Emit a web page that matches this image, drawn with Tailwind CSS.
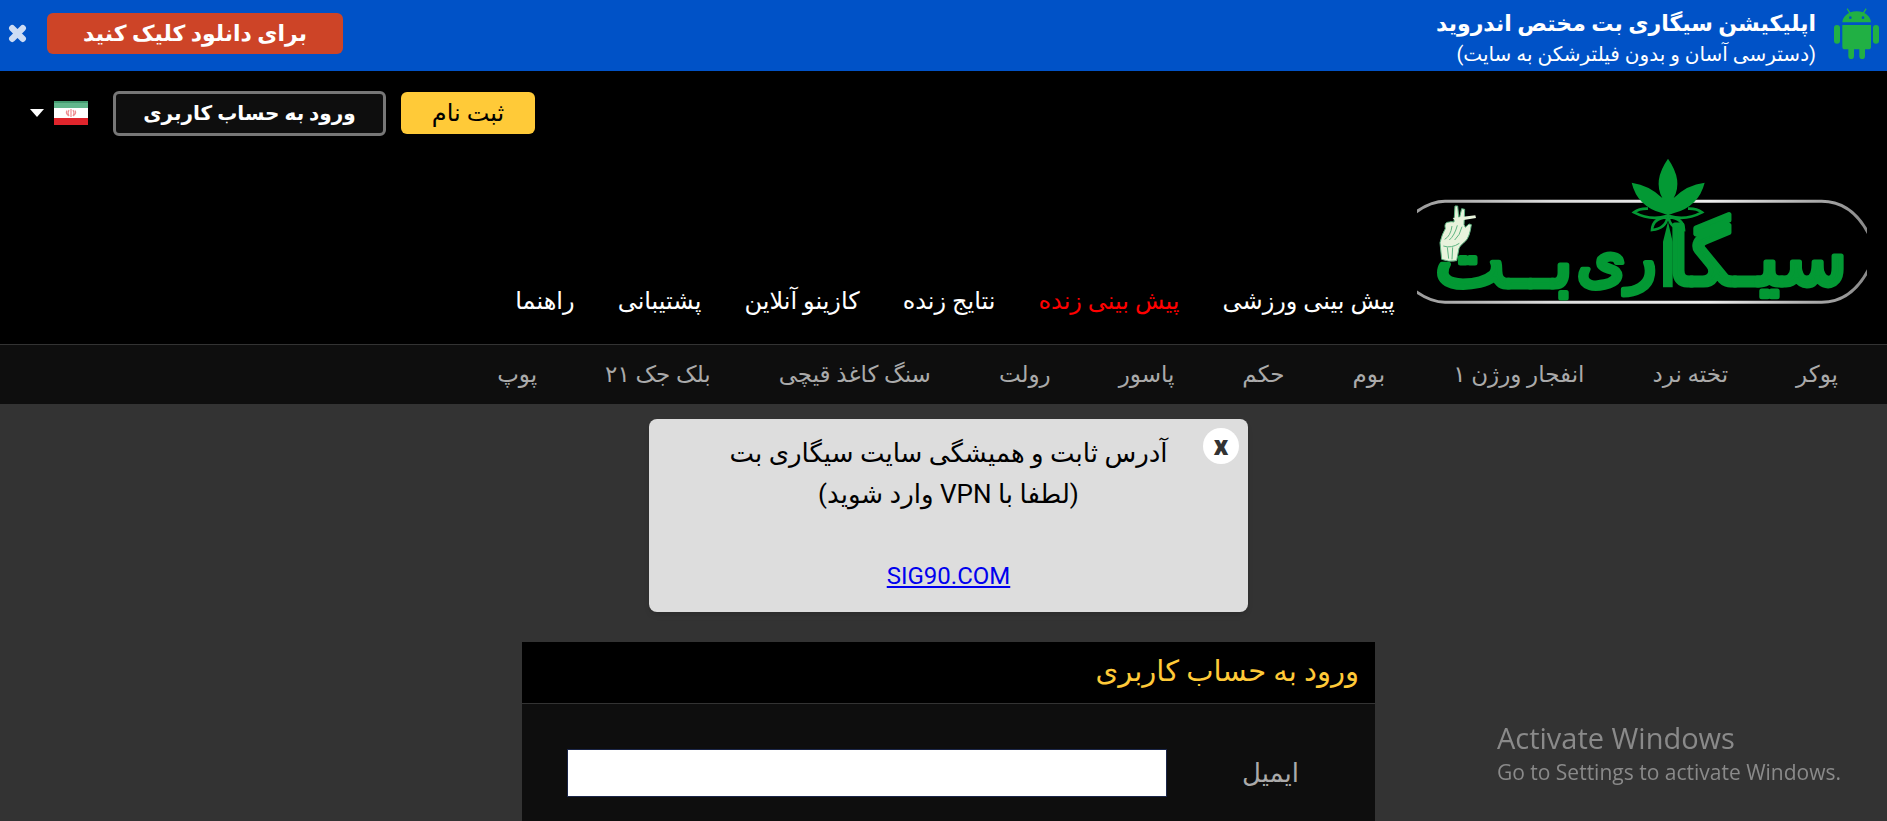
<!DOCTYPE html>
<html lang="fa" dir="rtl">
<head>
  <meta charset="UTF-8" />
  <meta name="viewport" content="width=device-width, initial-scale=1.0" />
  <title>سیگاری بت</title>
  <script src="https://cdn.jsdelivr.net/npm/@tailwindcss/browser@4"></script>
</head>
<body class="min-h-screen flex flex-col bg-[#333] text-white font-[Roboto,'DejaVu_Sans',sans-serif]">

  <!-- App banner -->
  <div class="flex items-start justify-between h-[71px] bg-[#0052c7] px-2">
    <div class="flex items-start gap-[18px] pt-2">
      <svg class="w-[45px] h-[51px]" viewBox="0 0 135 153" fill="#21b044" aria-hidden="true">
        <path d="M25 43c1-13 9-22 20-28L38 3l3-2 8 12c12-4 26-4 38 0l8-12 3 2-7 12c11 6 19 15 20 28z" />
        <rect y="51" width="18" height="56" rx="9" />
        <rect x="117" y="51" width="18" height="56" rx="9" />
        <path d="M25 51h86v65q0 8-8 8H93v21a8 8 0 0 1-17 0v-21H60v21a8 8 0 0 1-17 0v-21H33q-8 0-8-8z" />
        <circle cx="49" cy="29" r="4" fill="#0052c7" />
        <circle cx="87" cy="29" r="4" fill="#0052c7" />
      </svg>
      <div>
        <p class="text-[22px] leading-8 font-bold">اپلیکیشن سیگاری بت مختص اندروید</p>
        <p class="text-[20px] leading-7">(دسترسی آسان و بدون فیلترشکن به سایت)</p>
      </div>
    </div>
    <div class="flex items-center gap-5 pt-[13px]">
      <a href="#" class="flex items-center justify-center w-[296px] h-[41px] rounded-md bg-[#cd4427] text-[22px] leading-8 font-bold">برای دانلود کلیک کنید</a>
      <button type="button" aria-label="بستن" class="w-[19px]">
        <svg class="w-[19px] h-[19px]" viewBox="0 0 18 18" stroke="#cddcf4" stroke-width="6" stroke-linecap="round" aria-hidden="true">
          <path d="M4 4l10 10M14 4L4 14" />
        </svg>
      </button>
    </div>
  </div>

  <!-- Header -->
  <header class="bg-black">
    <div class="flex items-center justify-end h-[84px] gap-[15px] pl-[30px]">
      <a href="#" class="flex items-center justify-center w-[134px] h-[42px] rounded-md bg-[#ffca38] text-black text-[24px] leading-8">ثبت نام</a>
      <a href="#" class="flex items-center justify-center w-[273px] h-[45px] rounded-md border-3 border-[#777] bg-[#0e0e0e] text-[20px] leading-8 font-bold">ورود به حساب کاربری</a>
      <button type="button" aria-label="زبان" class="flex items-center gap-[10px] pr-[10px]">
        <svg class="w-[34px] h-[24px]" viewBox="0 0 34 24" aria-hidden="true">
          <rect width="34" height="24" fill="#fff" />
          <rect width="34" height="7" fill="#62b78c" />
          <rect width="34" height="2" fill="#449b70" />
          <rect y="17" width="34" height="7" fill="#e0252c" />
          <g fill="none" stroke="#ef8d90" stroke-width="1.2">
            <path d="M17 8v8M15 9q-2 3 0 6M19 9q2 3 0 6M13 9.500q-2 3 2 5.500M21 9.500q2 3-2 5.500" />
          </g>
        </svg>
        <svg class="w-[14px] h-[8px]" viewBox="0 0 14 8" fill="#fff" aria-hidden="true"><path d="M0 0h14L7 8z" /></svg>
      </button>
    </div>

    <div class="flex items-end pr-5 h-[189px] pb-[29px]">
      <a href="#" aria-label="سیگاری بت">
        <svg class="w-[450px] h-[160px]" viewBox="51 45 1350 480" aria-hidden="true">
          <defs>
            <linearGradient id="ring" x1="0" x2="1">
              <stop offset="0" stop-color="#999" />
              <stop offset=".3" stop-color="#ddd" />
              <stop offset=".65" stop-color="#eee" />
              <stop offset="1" stop-color="#888" />
            </linearGradient>
          </defs>
          <path d="M40 222q50-38 95-38h1130c65 0 110 40 140 96M1405 390c-30 56-75 97-140 97H135q-45 0-95-38" fill="none" stroke="url(#ring)" stroke-width="9" />
          <!-- leaf -->
          <g fill="#039934">
            <path d="M804 56q46 66 17 118 40-40 93-46-18 72-94 92l-16 6-16-6q-76-20-93-92 54 8 92 46-29-52 17-118z" />
            <path d="M797 225l7 20-15 60v137h29V305l-14-60 7-20z" />
          </g>
          <g fill="none" stroke="#039934" stroke-width="8">
            <path d="M744 206q-26-1-42 11 50 26 98 11M864 206q26-1 42 11-50 26-98 11" />
            <path d="M800 232q-42 2-44 38 42-5 46-38M808 232q42 2 44 38-42-5-46-38" />
          </g>
          <!-- hand with a cigarette -->
          <g fill="#e8f3dc" stroke="#5fb582" stroke-width="3">
            <path d="M125 358l-5-50q6-26 16-42-5-20 12-20 4-2 14 0l3-48h8l4 42 8-34 9 2-2 46 4 8 11-10 7 2q-5 38-18 50-20 16-20 26l-6 32q-24 5-45-4z" />
            <path d="M134 298q18-10 22-40M148 300q16-14 24-44M164 300q16-14 22-40M130 318q24 8 48-8M142 322l4 34M158 322l-2 36" fill="none" />
            <path d="M158 234l68-8 2 8-60 10z" stroke="none" />
          </g>
          <g fill="#039934" stroke="#039934" stroke-width="15" stroke-linejoin="round" font-family="DejaVu Sans" direction="rtl">
            <text x="1343" y="436" font-size="236">سیـگا</text>
            <text x="770" y="420" font-size="190">ری</text>
            <text x="520" y="442" font-size="225">بــت</text>
          </g>
        </svg>
      </a>
      <nav class="flex gap-[43px] pr-[22px] text-[24px] leading-7">
        <a href="#">پیش بینی ورزشی</a>
        <a href="#" class="text-[#f00]">پیش بینی زنده</a>
        <a href="#">نتایج زنده</a>
        <a href="#">کازینو آنلاین</a>
        <a href="#">پشتیبانی</a>
        <a href="#">راهنما</a>
      </nav>
    </div>

    <nav class="flex items-center h-[60px] gap-[68px] pr-[49px] border-t border-[#333] bg-[#0e0e0e] text-[23px] leading-8 text-[#aaa]">
      <a href="#">پوکر</a>
      <a href="#">تخته نرد</a>
      <a href="#">انفجار ورژن ۱</a>
      <a href="#">بوم</a>
      <a href="#">حکم</a>
      <a href="#">پاسور</a>
      <a href="#">رولت</a>
      <a href="#">سنگ کاغذ قیچی</a>
      <a href="#">بلک جک ۲۱</a>
      <a href="#">پوپ</a>
    </nav>
  </header>

  <main class="flex-1 flex flex-col items-center gap-[30px] pt-[15px] pl-[10px]">
    <!-- Notice -->
    <section class="relative w-[599px] pt-[14px] pb-[15px] rounded-lg bg-[#ddd] text-black text-center text-[26px] leading-[41px] shadow-md">
      <button type="button" aria-label="بستن" class="absolute top-[9px] right-[9px] w-9 h-9 rounded-full bg-white text-[#333] text-[28px] leading-8 font-black">x</button>
      <p>آدرس ثابت و همیشگی سایت سیگاری بت</p>
      <p>(لطفا با VPN وارد شوید)</p>
      <p class="pt-[41px] text-[24px] leading-[41px]"><a href="#" class="text-[#00e] underline">SIG90.COM</a></p>
    </section>

    <!-- Login form -->
    <form class="flex-1 w-[853px] bg-[#0e0e0e]">
      <h1 class="h-[62px] px-4 border-b border-[#333] bg-black text-[#ffca38] text-[29px] leading-[58px]">ورود به حساب کاربری</h1>
      <div class="flex items-center pt-[45px] pr-[76px]">
        <label for="email" class="w-[132px] text-[26px] leading-10 text-[#aaa]">ایمیل</label>
        <input type="text" id="email" class="w-[600px] h-12 px-3 bg-white text-black border border-[#1a2547]" />
      </div>
    </form>
  </main>

  <div dir="ltr" class="fixed right-[46px] bottom-[33px] text-[#8a8a8a] font-['Open_Sans',sans-serif]">
    <p class="text-[29px] leading-9">Activate Windows</p>
    <p class="text-[21px] leading-8">Go to Settings to activate Windows.</p>
  </div>

</body>
</html>
